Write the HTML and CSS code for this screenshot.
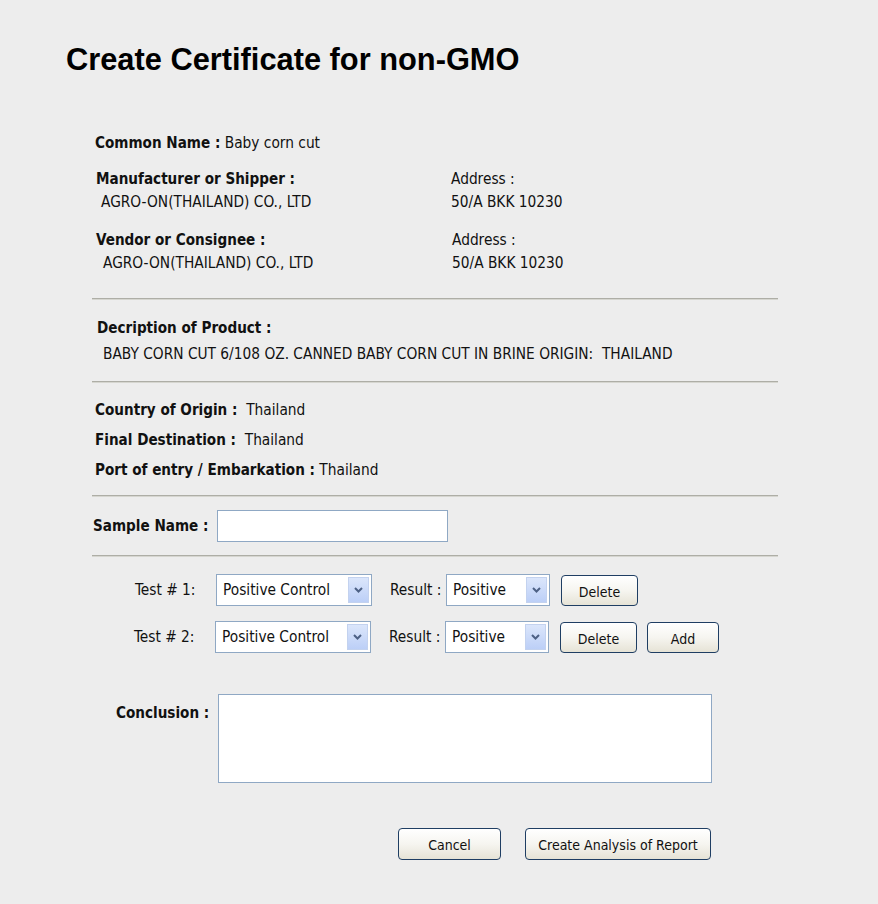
FILE: index.html
```html
<!DOCTYPE html>
<html>
<head>
<meta charset="utf-8">
<title>Create Certificate for non-GMO</title>
<link rel="stylesheet" href="styles.css">
</head>
<body>
<div class="page">
  <h1 class="title">Create Certificate for non-GMO</h1>
  <div class="content">
    <div class="line common"><b>Common Name :</b>&nbsp;Baby corn cut</div>

    <div class="parties">
      <div class="party">
        <div class="line"><b>Manufacturer or Shipper :</b></div>
        <div class="line val">AGRO-ON(THAILAND) CO., LTD</div>
      </div>
      <div class="party">
        <div class="line">Address :</div>
        <div class="line">50/A BKK 10230</div>
      </div>
      <div class="party p2">
        <div class="line"><b>Vendor or Consignee :</b></div>
        <div class="line val">AGRO-ON(THAILAND) CO., LTD</div>
      </div>
      <div class="party p2 shift">
        <div class="line">Address :</div>
        <div class="line">50/A BKK 10230</div>
      </div>
    </div>

    <div class="rule r1"></div>

    <div class="desc">
      <div class="line"><b>Decription of Product :</b></div>
      <div class="line val2">BABY CORN CUT 6/108 OZ. CANNED BABY CORN CUT IN BRINE ORIGIN:&nbsp; THAILAND</div>
    </div>

    <div class="rule r2"></div>

    <div class="origin">
      <div class="oline"><b>Country of Origin :</b>&nbsp;&nbsp;Thailand</div>
      <div class="oline"><b>Final Destination :</b>&nbsp;&nbsp;Thailand</div>
      <div class="oline"><b>Port of entry / Embarkation :</b>&nbsp;Thailand</div>
    </div>

    <div class="rule r3"></div>

    <div class="sample">
      <b class="slabel">Sample Name :</b>
      <input class="textbox" type="text">
    </div>

    <div class="rule r4"></div>

    <div class="tests">
      <div class="test">
        <span class="tlabel">Test # 1:</span>
        <div class="sel wide"><span class="seltext">Positive Control</span><span class="arrow"><svg width="9" height="6" viewBox="0 0 9 6"><path d="M1 1 L4.5 4.5 L8 1" fill="none" stroke="#4d6185" stroke-width="2"/></svg></span></div>
        <span class="rlabel">Result :</span>
        <div class="sel narrow"><span class="seltext">Positive</span><span class="arrow"><svg width="9" height="6" viewBox="0 0 9 6"><path d="M1 1 L4.5 4.5 L8 1" fill="none" stroke="#4d6185" stroke-width="2"/></svg></span></div>
        <button class="btn del">Delete</button>
      </div>
      <div class="test t2">
        <span class="tlabel">Test # 2:</span>
        <div class="sel wide"><span class="seltext">Positive Control</span><span class="arrow"><svg width="9" height="6" viewBox="0 0 9 6"><path d="M1 1 L4.5 4.5 L8 1" fill="none" stroke="#4d6185" stroke-width="2"/></svg></span></div>
        <span class="rlabel">Result :</span>
        <div class="sel narrow"><span class="seltext">Positive</span><span class="arrow"><svg width="9" height="6" viewBox="0 0 9 6"><path d="M1 1 L4.5 4.5 L8 1" fill="none" stroke="#4d6185" stroke-width="2"/></svg></span></div>
        <button class="btn del">Delete</button>
        <button class="btn add">Add</button>
      </div>
    </div>

    <div class="conclusion">
      <b class="clabel">Conclusion :</b>
      <textarea class="area"></textarea>
    </div>

    <div class="actions">
      <button class="btn cancel">Cancel</button>
      <button class="btn create">Create Analysis of Report</button>
    </div>
  </div>
</div>
</body>
</html>
```

FILE: styles.css
```css
html, body {
  margin: 0;
  padding: 0;
  background: #ededed;
}
body {
  font-family: "DejaVu Sans Condensed", "DejaVu Sans", sans-serif;
  font-size: 15.3px;
  color: #111;
}
.page {
  padding: 40px 0 40px 66px;
}
.title {
  font-family: "Liberation Sans", Arial, sans-serif;
  font-weight: bold;
  font-size: 30.8px;
  line-height: 40px;
  margin: 0;
  color: #000;
}
.content {
  width: 686px;
  margin-left: 26px;
}
.line {
  line-height: 20px;
  height: 20px;
  white-space: nowrap;
}
b {
  font-weight: bold;
  font-size: 15.1px;
}
.common {
  margin-top: 53px;
  padding-left: 3px;
}
.parties {
  display: grid;
  grid-template-columns: 355px 1fr;
  margin-top: 16px;
  padding-left: 4px;
}
.party .line + .line { margin-top: 3px; }
.party .val { padding-left: 5px; }
.p2 { margin-top: 18px; }
.p2 .val { padding-left: 7px; }
.shift { padding-left: 1px; }
.rule {
  height: 0;
  border-top: 1px solid #aeaea6;
  border-bottom: 1px solid #d6d6d0;
}
.r1 { margin-top: 25px; }
.desc {
  margin-top: 18px;
  padding-left: 5px;
}
.desc .line + .line { margin-top: 6px; }
.val2 { padding-left: 6px; }
.r2 { margin-top: 17px; }
.origin {
  margin-top: 17px;
  padding-left: 3px;
}
.oline {
  line-height: 20px;
  height: 20px;
  white-space: nowrap;
}
.oline + .oline { margin-top: 10px; }
.r3 { margin-top: 15px; }
.sample {
  display: flex;
  align-items: center;
  margin-top: 13px;
  padding-left: 1px;
}
.slabel {
  width: 124px;
  white-space: nowrap;
}
.textbox {
  width: 231px;
  height: 32px;
  box-sizing: border-box;
  border: 1px solid #8fa8c4;
  background: #fff;
  margin: 0;
  padding: 0 4px;
}
.r4 { margin-top: 13px; }
.tests {
  margin-top: 17px;
  padding-left: 43px;
}
.test {
  display: flex;
  align-items: center;
  height: 32px;
}
.t2 {
  margin-top: 15px;
  margin-left: -1px;
}
.tlabel {
  width: 81px;
  white-space: nowrap;
}
.sel {
  position: relative;
  height: 32px;
  box-sizing: border-box;
  border: 1px solid #8fa8c4;
  background: #fff;
  display: flex;
  align-items: center;
  padding-left: 6px;
}
.wide { width: 156px; }
.narrow { width: 104px; }
.seltext {
  flex: 1;
  white-space: nowrap;
}
.arrow {
  position: absolute;
  right: 2px;
  top: 2px;
  width: 21px;
  height: 26px;
  box-sizing: border-box;
  border: 1px solid #c3d2ef;
  background: linear-gradient(#dbe6fb, #bccff7);
  display: flex;
  align-items: center;
  justify-content: center;
}
.rlabel {
  margin-left: 18px;
  width: 56px;
  white-space: nowrap;
}
.btn {
  font-family: "DejaVu Sans Condensed", "DejaVu Sans", sans-serif;
  font-size: 14px;
  color: #111;
  height: 31px;
  box-sizing: border-box;
  border: 1px solid #1f3e63;
  border-radius: 4px;
  background: linear-gradient(#ffffff 0%, #f6f5f0 50%, #e6e3d6 100%);
  padding: 0;
  margin: 0;
  line-height: 29px;
  padding-top: 2px;
}
.del {
  width: 77px;
  margin-left: 11px;
}
.add {
  width: 72px;
  margin-left: 10px;
}
.conclusion {
  display: flex;
  align-items: flex-start;
  margin-top: 41px;
  padding-left: 24px;
}
.clabel {
  width: 102px;
  margin-top: 9px;
  line-height: 20px;
  white-space: nowrap;
}
.area {
  width: 494px;
  height: 89px;
  box-sizing: border-box;
  border: 1px solid #8fa8c4;
  background: #fff;
  margin: 0;
  resize: none;
}
.actions {
  display: flex;
  gap: 24px;
  margin-top: 45px;
  padding-left: 306px;
}
.cancel {
  width: 103px;
  height: 32px;
}
.create {
  width: 186px;
  height: 32px;
}
```
